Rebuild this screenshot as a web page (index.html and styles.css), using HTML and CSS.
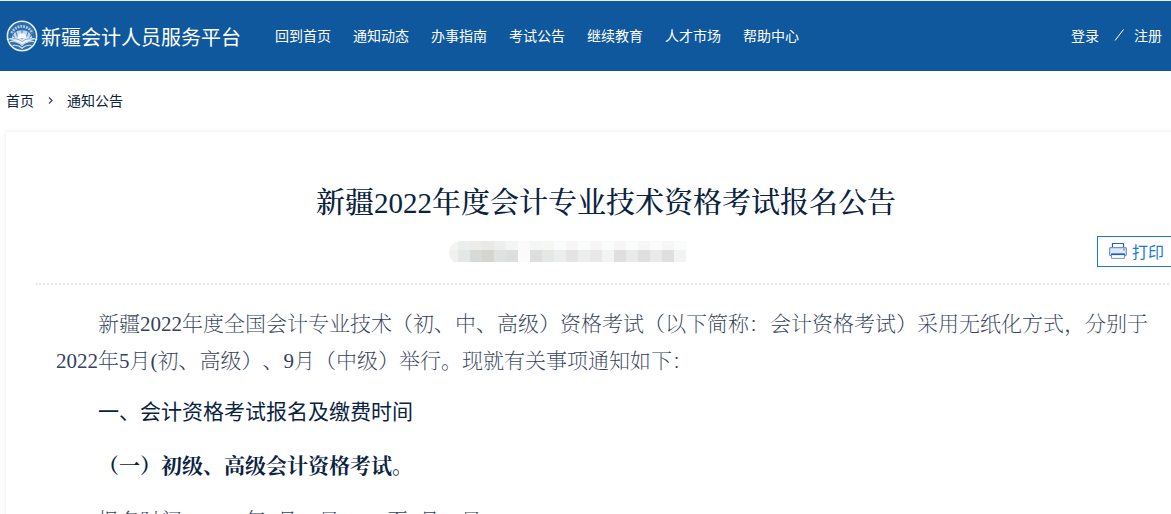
FILE: index.html
```
<!DOCTYPE html>
<html lang="zh-CN">
<head>
    <meta charset="UTF-8">
    <meta name="viewport" content="width=device-width, initial-scale=1.0">
    <title>新疆会计人员服务平台</title>
    <link rel="stylesheet" href="styles.css">
</head>
<body>
    <header class="header">
        <a class="brand" href="#">
            <svg class="logo" viewBox="0 0 36 34" aria-hidden="true">
                <circle cx="18" cy="17" r="15.5" fill="#2d6dab" stroke="#e3edf6" stroke-width="1.6"/>
                <path d="M7 14a12 12 0 0 1 22 0" fill="none" stroke="#a9c6e0" stroke-width="3" stroke-dasharray="2 1"/>
                <path d="M7 21q1-10 11-10t11 10z" fill="#c3d7ea"/>
                <path d="M18 20V9M14 20l-3-9M22 20l3-9M11 20l-4-6M25 20l4-6" stroke="#3e79b3" stroke-width="1"/>
                <path d="M13 19q0-5 5-5t5 5z" fill="#f3f8fc"/>
                <path d="M1 21q10-5 17 0 7-5 17 0-9 0-17 5-8-5-17-5z" fill="#eef5fb"/>
                <path d="M5 23q8-1 13 4 5-5 13-4M8 27q6-1 10 3 4-4 10-3" fill="none" stroke="#c9dced" stroke-width="1.3"/>
                <path d="M4 21q8-3 14 2 6-5 14-2" fill="none" stroke="#5287bc" stroke-width=".8"/>
            </svg>
            <span class="brand-name">新疆会计人员服务平台</span>
        </a>
        <nav class="nav">
            <a href="#">回到首页</a>
            <a href="#">通知动态</a>
            <a href="#">办事指南</a>
            <a href="#">考试公告</a>
            <a href="#">继续教育</a>
            <a href="#">人才市场</a>
            <a href="#">帮助中心</a>
        </nav>
        <div class="account">
            <a href="#">登录</a>
            <svg class="slash" viewBox="0 0 10 12" aria-hidden="true"><path d="M1 11.500L9.500.5" stroke="#fff"/></svg>
            <a href="#">注册</a>
        </div>
    </header>

    <main class="container">
        <nav class="breadcrumb">
            <a href="#">首页</a>
            <svg class="chevron" viewBox="0 0 5 7" aria-hidden="true"><path d="M1 .5l3 3-3 3" fill="none" stroke="#3a4560" stroke-width="1.2"/></svg>
            <a href="#">通知公告</a>
        </nav>

        <article class="card">
            <h1>新疆2022年度会计专业技术资格考试报名公告</h1>
            <div class="meta">
                <div class="source">
                    <!-- masked source and date -->
                    <svg class="mask" viewBox="0 0 240 21" shape-rendering="crispEdges" aria-hidden="true">
                        <clipPath id="round"><path d="M14 0H240V21H8Q3 17 3 12 4 1 14 0z"/></clipPath>
                        <g clip-path="url(#round)">
                            <path d="M0 0h12v9H0z" fill="#f4f4f3"/>
                            <path d="M12 0h12v9H12z" fill="#eceeed"/>
                            <path d="M24 0h12v9H24z" fill="#ecedeb"/>
                            <path d="M36 0h12v9H36z" fill="#e9e9e7"/>
                            <path d="M48 0h12v9H48z" fill="#eeeeef"/>
                            <path d="M60 0h12v9H60z" fill="#f3f5f4"/>
                            <path d="M72 0h12v21H72z" fill="#fbfbfb"/>
                            <path d="M84 0h12v9H84z" fill="#f4f6f5"/>
                            <path d="M96 0h12v9H96z" fill="#f6f6f3"/>
                            <path d="M108 0h12v9h-12zM132 0h12v9h-12zM156 0h12v9h-12zM180 0h12v9h-12zM204 0h12v9h-12zM228 0h12v9h-12z" fill="#fafcfb"/>
                            <path d="M120 0h12v9h-12zM144 0h12v9h-12zM168 0h12v9h-12zM192 0h12v9h-12zM216 0h12v9h-12z" fill="#f6f6f6"/>
                            <path d="M0 9h12v12H0z" fill="#f0f0ee"/>
                            <path d="M12 9h12v12H12z" fill="#e3e7e5"/>
                            <path d="M24 9h12v12H24z" fill="#d8dad7"/>
                            <path d="M36 9h12v12H36z" fill="#d5d4d1"/>
                            <path d="M48 9h12v12H48z" fill="#e0e2df"/>
                            <path d="M60 9h12v12H60zM84 9h12v12H84z" fill="#dcdfde"/>
                            <path d="M96 9h12v12H96z" fill="#e6e8e5"/>
                            <path d="M108 9h12v12h-12zM132 9h12v12h-12z" fill="#eceeed"/>
                            <path d="M120 9h12v12h-12z" fill="#e4e4e2"/>
                            <path d="M144 9h12v12h-12z" fill="#e9e8e6"/>
                            <path d="M168 9h12v12h-12zM192 9h12v12h-12zM216 9h12v12h-12z" fill="#dfdfdd"/>
                            <path d="M156 9h12v12h-12zM228 9h12v12h-12z" fill="#f2f4f3"/>
                            <path d="M180 9h12v12h-12zM204 9h12v12h-12z" fill="#e9e9e9"/>
                        </g>
                    </svg>
                </div>
                <button class="print" type="button">
                    <svg class="printer" viewBox="0 0 18 16" aria-hidden="true">
                        <path d="M3.500 5V.5h11V5" fill="#fff" stroke="#2459d6" stroke-width="1.200"/>
                        <rect x=".6" y="4.600" width="16.800" height="8" rx="1" fill="#dceafb" stroke="#6c94e8" stroke-width="1.200"/>
                        <path d="M2.500 10.500h13v4.900h-13z" fill="#fff" stroke="#6c94e8"/>
                        <path d="M2 11.500h14" stroke="#2459d6" stroke-width="1.200"/>
                        <path d="M14 5.500h2v2h-2z" fill="#f08468"/>
                    </svg>
                    <span>打印</span>
                </button>
            </div>

            <div class="content">
                <p>新疆2022年度全国会计专业技术（初、中、高级）资格考试（以下简称：会计资格考试）采用无纸化方式，分别于2022年5月(初、高级）、9月（中级）举行。现就有关事项通知如下：</p>
                <h2>一、会计资格考试报名及缴费时间</h2>
                <h3>（一）初级、高级会计资格考试。</h3>
                <p>报名时间：2022年1月10日10:00至1月24日12:00。</p>
            </div>
        </article>
    </main>
</body>
</html>
```
FILE: styles.css
```
* {
    box-sizing: border-box;
}
html {
    height: 100%;
    overflow: hidden;
}
body {
    margin: 0;
    height: 100%;
    overflow: hidden;
    background: #fff;
    color: #0b2341;
    font-family: "Liberation Sans", "Noto Sans CJK SC", sans-serif;
    font-size: 14px;
    text-spacing-trim: space-all;
}
a {
    color: inherit;
    text-decoration: none;
}
svg {
    display: block;
    flex: none;
}

/* top bar */
.header {
    display: flex;
    align-items: center;
    height: 71px;
    padding: 0 9px 0 5px;
    border-top: 1px solid #e6eef5;
    background: #10589e;
    color: #fff;
    white-space: nowrap;
}
.brand {
    display: flex;
    align-items: center;
    gap: 2px;
    font-size: 20px;
    line-height: 30px;
}
.brand-name {
    padding-top: 4px;
}
.logo {
    width: 34px;
    height: 34px;
}
.nav {
    display: flex;
    gap: 22px;
    margin-left: 34px;
    padding-bottom: 2px;
}
.account {
    display: flex;
    align-items: center;
    gap: 10px;
    margin-left: auto;
    padding-bottom: 2px;
}
.slash {
    width: 10px;
    height: 12px;
    margin-left: 5px;
}

/* page */
.container {
    min-width: 1206px;
    padding-left: 6px;
}
.breadcrumb {
    display: flex;
    align-items: center;
    gap: 14px;
    height: 61px;
    padding-bottom: 3px;
}
.chevron {
    width: 5px;
    height: 7px;
}
.card {
    padding: 50px 30px;
    box-shadow: 0 0 4px rgba(0, 0, 0, 0.1);
}
.card h1 {
    margin: 0;
    font-family: "Liberation Serif", "Noto Serif CJK SC", "Noto Sans CJK SC", serif;
    font-size: 29px;
    font-weight: 500;
    line-height: 42px;
    text-align: center;
}
.meta {
    display: flex;
    align-items: center;
    padding: 12px 0 16px;
    border-bottom: 2px dotted #e8e8e8;
}
.source {
    display: flex;
    flex: 1;
    justify-content: center;
}
.mask {
    width: 240px;
    height: 21px;
}
.print {
    display: flex;
    align-items: center;
    gap: 5px;
    height: 31px;
    padding: 0 11px 2px;
    border: 1px solid #1e78d8;
    background: #fff;
    color: #1e78d8;
    font-family: inherit;
    font-size: 16px;
    cursor: pointer;
}
.printer {
    width: 18px;
    height: 16px;
}

/* article text */
.content {
    padding: 21px 20px 0;
    font-family: "Liberation Serif", "Noto Serif CJK SC", "Noto Sans CJK SC", serif;
    font-size: 21px;
    line-height: 37px;
    text-indent: 2em;
}
.content p {
    margin: 0 0 13px;
    color: #35425c;
    font-weight: 200;
}
.content h2,
.content h3 {
    margin: 0 0 18px;
    font-size: 21px;
}
.content h2 {
    font-family: "Liberation Sans", "Noto Sans CJK SC", sans-serif;
    font-weight: 400;
}
.content h3 {
    font-weight: 700;
}
```
